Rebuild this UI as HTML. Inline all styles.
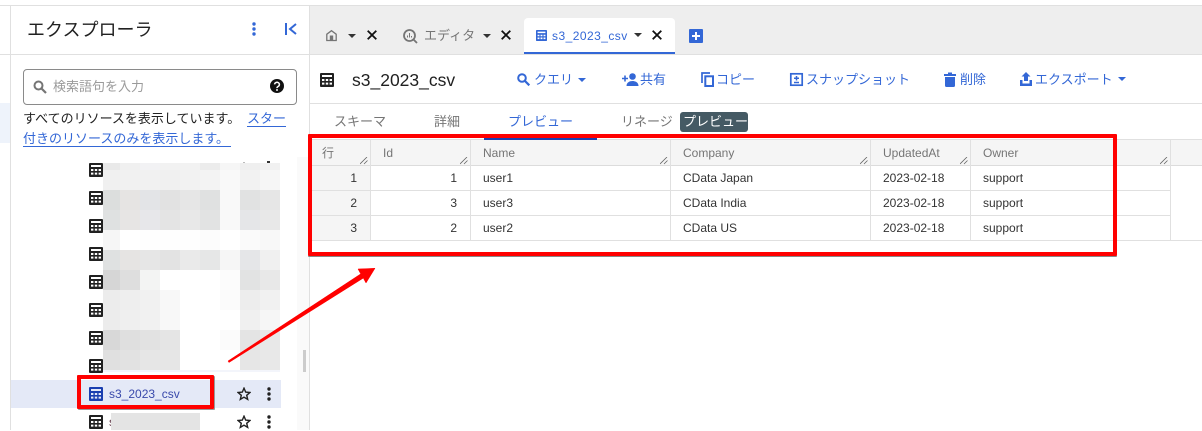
<!DOCTYPE html>
<html lang="ja"><head><meta charset="utf-8"><style>
html,body{margin:0;padding:0;background:#fff}
body{width:1202px;height:430px;position:relative;overflow:hidden;font-family:"Liberation Sans","Noto Sans CJK JP",sans-serif;font-size:13px;color:#212121}
.a{position:absolute}
.t{position:absolute;white-space:nowrap;line-height:18px;height:18px}
.b{color:#3367d6}.g{color:#757575}
.h{color:#757575;font-size:12px;top:144px}
.d{color:#333;font-size:12px}
svg{position:absolute;overflow:visible}
.r{text-align:right;width:30px}
</style></head><body>
<svg width="0" height="0" style="position:absolute"><defs>
<symbol id="tb" viewBox="0 0 14 14"><path fill-rule="evenodd" d="M1 0h12a1 1 0 0 1 1 1v12a1 1 0 0 1-1 1H1a1 1 0 0 1-1-1V1a1 1 0 0 1 1-1zM2 2v2h10V2zM2 6v2h2.4V6zM5.8 6v2h2.4V6zM9.6 6v2H12V6zM2 9.6v2h2.4v-2zM5.8 9.6v2h2.4v-2zM9.6 9.6v2H12v-2z"/></symbol>
<symbol id="star" viewBox="0 0 14 14"><path fill="none" stroke="#212121" stroke-width="1.4" d="M7 1.2l1.7 3.9 4.2.4-3.2 2.8 1 4.1L7 10.2l-3.7 2.2 1-4.1L1.1 5.5l4.2-.4z"/></symbol>
<symbol id="vd" viewBox="0 0 4 14"><circle cx="2" cy="2" r="1.7"/><circle cx="2" cy="7" r="1.7"/><circle cx="2" cy="12" r="1.7"/></symbol>
<symbol id="grip" viewBox="0 0 8 8"><path fill="none" stroke="#666" stroke-width=".8" d="M0 7L7 0M4 7L7.5 3.5"/></symbol>
</defs></svg>

<!-- chrome -->
<div class="a" style="left:0;top:5px;width:1202px;height:1px;background:#e0e0e0"></div>
<div class="a" style="left:0;top:103px;width:10px;height:40px;background:#eef3fb"></div>
<div class="a" style="left:10px;top:5px;width:1px;height:425px;background:#e0e0e0"></div>
<div class="a" style="left:309px;top:5px;width:1px;height:425px;background:#e0e0e0"></div>
<div class="a" style="left:0;top:54px;width:1202px;height:1px;background:#e0e0e0"></div>
<div class="a" style="left:310px;top:6px;width:892px;height:48px;background:#eee"></div>
<div class="a" style="left:310px;top:103px;width:892px;height:1px;background:#e0e0e0"></div>

<!-- sidebar header -->
<div class="t" style="left:27px;top:19px;font-size:18px;line-height:22px;height:22px">エクスプローラ</div>
<svg style="left:252px;top:22px;fill:#3367d6" width="4" height="14"><use href="#vd"/></svg>
<svg style="left:285px;top:23px" width="12" height="12"><path d="M1 0v12" stroke="#3367d6" stroke-width="2"/><path d="M11 1L5 6l6 5" fill="none" stroke="#3367d6" stroke-width="2"/></svg>
<div class="a" style="left:23px;top:69px;width:272px;height:34px;border:1px solid #8a8a8a;border-radius:4px"></div>
<svg style="left:33px;top:80px" width="14" height="14"><circle cx="5.5" cy="5.5" r="4" fill="none" stroke="#757575" stroke-width="2"/><path d="M8.5 8.5l4.5 4.5" stroke="#757575" stroke-width="2.2"/></svg>
<div class="t" style="left:53px;top:78px;color:#9a9a9a">検索語句を入力</div>
<svg style="left:270px;top:79px" width="14" height="14"><circle cx="7" cy="7" r="7" fill="#111"/><path d="M4.6 5.4a2.4 2.2 0 1 1 3.6 2c-.8.5-1.2.8-1.2 1.7" fill="none" stroke="#fff" stroke-width="1.5"/><circle cx="7" cy="11" r=".95" fill="#fff"/></svg>
<div class="t" style="left:23px;top:110px">すべてのリソースを表示しています。</div>
<div class="t b" style="left:247px;top:110px">スター</div>
<div class="a" style="left:247px;top:126px;width:39px;height:1px;background:#3367d6"></div>
<div class="t b" style="left:23px;top:130px">付きのリソースのみを表示します。</div>
<div class="a" style="left:23px;top:146px;width:208px;height:1px;background:#3367d6"></div>

<!-- scrollbar -->
<div class="a" style="left:297px;top:157px;width:12px;height:273px;background:#fafafa"></div>
<div class="a" style="left:303px;top:350px;width:3px;height:22px;background:#ccc"></div>

<!-- blurred mosaic -->
<div class="a" style="left:243px;top:162px;width:2px;height:1px;background:#bbb"></div>
<div class="a" style="left:267px;top:161px;width:3px;height:2px;background:#333"></div>
<svg style="left:103px;top:163px" width="177" height="209" shape-rendering="crispEdges">
<g transform="translate(0,0)"><rect x="0" width="17" height="7" fill="#e9e9e9"/><rect x="17" width="20" height="7" fill="#f0f0f0"/><rect x="37" width="20" height="7" fill="#f2f2f4"/><rect x="57" width="20" height="7" fill="#f2f2f2"/><rect x="77" width="20" height="7" fill="#f2f2f2"/><rect x="97" width="20" height="7" fill="#ececec"/><rect x="117" width="20" height="7" fill="#f6f6f6"/><rect x="137" width="20" height="7" fill="#efefef"/><rect x="157" width="20" height="7" fill="#f1f1f1"/></g>
<g transform="translate(0,7)"><rect x="0" width="17" height="20" fill="#f0f0f0"/><rect x="17" width="20" height="20" fill="#f1f1f1"/><rect x="37" width="20" height="20" fill="#f1f1f1"/><rect x="57" width="20" height="20" fill="#f0f0f0"/><rect x="77" width="20" height="20" fill="#f2f2f2"/><rect x="97" width="20" height="20" fill="#f3f3f3"/><rect x="117" width="20" height="20" fill="#f9f9f9"/><rect x="137" width="20" height="20" fill="#f2f2f2"/><rect x="157" width="20" height="20" fill="#f6f6f6"/></g>
<g transform="translate(0,27)"><rect x="0" width="17" height="20" fill="#dcdedd"/><rect x="17" width="20" height="20" fill="#e6e4e3"/><rect x="37" width="20" height="20" fill="#e3e4e7"/><rect x="57" width="20" height="20" fill="#e2e2e2"/><rect x="77" width="20" height="20" fill="#e6e6e6"/><rect x="97" width="20" height="20" fill="#e0e1e1"/><rect x="117" width="20" height="20" fill="#f9f9f9"/><rect x="137" width="20" height="20" fill="#e1e2e2"/><rect x="157" width="20" height="20" fill="#e6e6e6"/></g>
<g transform="translate(0,47)"><rect x="0" width="17" height="20" fill="#dfe1e1"/><rect x="17" width="20" height="20" fill="#e7e5e4"/><rect x="37" width="20" height="20" fill="#e7e7ea"/><rect x="57" width="20" height="20" fill="#e4e4e4"/><rect x="77" width="20" height="20" fill="#e8e8e8"/><rect x="97" width="20" height="20" fill="#e2e3e3"/><rect x="117" width="20" height="20" fill="#f9f9f9"/><rect x="137" width="20" height="20" fill="#e5e6e8"/><rect x="157" width="20" height="20" fill="#e8e8e8"/></g>
<g transform="translate(0,67)"><rect x="0" width="17" height="20" fill="#f6f6f6"/><rect x="17" width="20" height="20" fill="#fff"/><rect x="37" width="20" height="20" fill="#fefefe"/><rect x="57" width="20" height="20" fill="#fefefe"/><rect x="77" width="20" height="20" fill="#fefefe"/><rect x="97" width="20" height="20" fill="#fcfcfc"/><rect x="117" width="20" height="20" fill="#fff"/><rect x="137" width="20" height="20" fill="#fafafa"/><rect x="157" width="20" height="20" fill="#f8f8f8"/></g>
<g transform="translate(0,87)"><rect x="0" width="17" height="20" fill="#dfe1e1"/><rect x="17" width="20" height="20" fill="#e6e4e3"/><rect x="37" width="20" height="20" fill="#e6e6e6"/><rect x="57" width="20" height="20" fill="#e3e3e3"/><rect x="77" width="20" height="20" fill="#eaeaea"/><rect x="97" width="20" height="20" fill="#e6e7e7"/><rect x="117" width="20" height="20" fill="#f6f6f6"/><rect x="137" width="20" height="20" fill="#e5e6e8"/><rect x="157" width="20" height="20" fill="#f0f0f0"/></g>
<g transform="translate(0,107)"><rect x="0" width="17" height="20" fill="#d6d6d6"/><rect x="17" width="20" height="20" fill="#dedede"/><rect x="37" width="20" height="20" fill="#f3f4f3"/><rect x="117" width="20" height="20" fill="#fcfcfc"/><rect x="137" width="20" height="20" fill="#e2e3e3"/><rect x="157" width="20" height="20" fill="#e8e8e8"/></g>
<g transform="translate(0,127)"><rect x="0" width="17" height="20" fill="#ececec"/><rect x="17" width="20" height="20" fill="#eeeeee"/><rect x="37" width="20" height="20" fill="#f1f1f1"/><rect x="57" width="20" height="20" fill="#f8f8f8"/><rect x="117" width="20" height="20" fill="#fbfbfb"/><rect x="137" width="20" height="20" fill="#ededed"/><rect x="157" width="20" height="20" fill="#f1f1f1"/></g>
<g transform="translate(0,147)"><rect x="0" width="17" height="20" fill="#ececec"/><rect x="17" width="20" height="20" fill="#efefef"/><rect x="37" width="20" height="20" fill="#f1f1f1"/><rect x="57" width="20" height="20" fill="#f8f8f8"/><rect x="137" width="20" height="20" fill="#f0f0f0"/><rect x="157" width="20" height="20" fill="#f6f6f6"/></g>
<g transform="translate(0,167)"><rect x="0" width="17" height="20" fill="#d8d8d8"/><rect x="17" width="20" height="20" fill="#dfdfdf"/><rect x="37" width="20" height="20" fill="#e2e2e2"/><rect x="57" width="20" height="20" fill="#e5e5e5"/><rect x="117" width="20" height="20" fill="#fbfbfb"/><rect x="137" width="20" height="20" fill="#e4e4e4"/><rect x="157" width="20" height="20" fill="#e8e8e8"/></g>
<g transform="translate(0,187)"><rect x="0" width="17" height="20" fill="#e0e0e0"/><rect x="17" width="20" height="20" fill="#e2e2e2"/><rect x="37" width="20" height="20" fill="#e6e6e6"/><rect x="57" width="20" height="20" fill="#e6e6e6"/><rect x="137" width="20" height="20" fill="#e6e6e6"/><rect x="157" width="20" height="20" fill="#e8e8e8"/></g>
<rect y="207" width="177" height="2" fill="#f3f5fb"/>
</svg>
<svg style="left:89px;top:163px;fill:#212121" width="14" height="14"><use href="#tb"/></svg>
<svg style="left:89px;top:191px;fill:#212121" width="14" height="14"><use href="#tb"/></svg>
<svg style="left:89px;top:219px;fill:#212121" width="14" height="14"><use href="#tb"/></svg>
<svg style="left:89px;top:247px;fill:#212121" width="14" height="14"><use href="#tb"/></svg>
<svg style="left:89px;top:275px;fill:#212121" width="14" height="14"><use href="#tb"/></svg>
<svg style="left:89px;top:303px;fill:#212121" width="14" height="14"><use href="#tb"/></svg>
<svg style="left:89px;top:331px;fill:#212121" width="14" height="14"><use href="#tb"/></svg>
<svg style="left:89px;top:359px;fill:#212121" width="14" height="14"><use href="#tb"/></svg>

<!-- selected row -->
<div class="a" style="left:11px;top:380px;width:270px;height:28px;background:#e4e9f7"></div>
<svg style="left:89px;top:387px;fill:#1a3fb0" width="14" height="14"><use href="#tb"/></svg>
<div class="t" style="left:109px;top:385px;font-size:12px;color:#3949ab">s3_2023_csv</div>
<svg style="left:237px;top:387px" width="14" height="14"><use href="#star"/></svg>
<svg style="left:267px;top:387px;fill:#212121" width="4" height="14"><use href="#vd"/></svg>
<div class="a" style="left:77px;top:375px;width:129px;height:26px;border:4px solid #f00;border-radius:1px;box-shadow:1px 1px 0 #999"></div>

<svg style="left:89px;top:415px;fill:#212121" width="14" height="14"><use href="#tb"/></svg>
<div class="t" style="left:109px;top:413px;font-size:12px;color:#5a3040">s</div>
<div class="a" style="left:111px;top:413px;width:89px;height:17px;background:#e4e4e4"></div>
<svg style="left:237px;top:415px" width="14" height="14"><use href="#star"/></svg>
<svg style="left:267px;top:415px;fill:#212121" width="4" height="14"><use href="#vd"/></svg>

<!-- tabs -->
<svg style="left:326px;top:30px" width="11" height="11"><path d="M5.5.7L.8 4.2V10.500h9.400V4.200z" fill="none" stroke="#757575" stroke-width="1.300"/><rect x="3.800" y="5.500" width="3.400" height="5" fill="#757575"/></svg>
<svg style="left:348px;top:34px" width="8" height="4"><path d="M0 0h8L4 4z" fill="#333"/></svg>
<svg style="left:367px;top:30px" width="10" height="10"><path d="M.7.7l8.600 8.600M9.300.7L.7 9.300" stroke="#111" stroke-width="1.800"/></svg>
<svg style="left:403px;top:29px" width="15" height="15"><circle cx="6.500" cy="6.500" r="5.500" fill="none" stroke="#757575" stroke-width="1.800"/><path d="M10.500 10.500l3.500 3.500" stroke="#757575" stroke-width="1.800"/><path d="M4.500 6.500v2M6.500 4v4.500M8.500 7v1.500" stroke="#757575"/></svg>
<div class="t g" style="left:424px;top:27px">エディタ</div>
<svg style="left:483px;top:34px" width="8" height="4"><path d="M0 0h8L4 4z" fill="#333"/></svg>
<svg style="left:501px;top:30px" width="10" height="10"><path d="M.7.7l8.600 8.600M9.300.7L.7 9.300" stroke="#111" stroke-width="1.800"/></svg>
<div class="a" style="left:524px;top:18px;width:151px;height:36px;background:#fff;border-radius:4px 4px 0 0"></div>
<div class="a" style="left:524px;top:52px;width:151px;height:2px;background:#3367d6"></div>
<svg style="left:536px;top:30px;fill:#3367d6" width="11" height="11"><use href="#tb"/></svg>
<div class="t b" style="left:552px;top:27px;font-size:12px;letter-spacing:.45px">s3_2023_csv</div>
<svg style="left:634px;top:33px" width="8" height="4"><path d="M0 0h8L4 4z" fill="#333"/></svg>
<svg style="left:652px;top:30px" width="10" height="10"><path d="M.7.7l8.600 8.600M9.300.7L.7 9.300" stroke="#111" stroke-width="1.800"/></svg>
<svg style="left:689px;top:29px" width="14" height="14"><rect width="14" height="14" rx="1" fill="#3367d6"/><path d="M7 3v8M3 7h8" stroke="#fff" stroke-width="2"/></svg>

<!-- toolbar -->
<svg style="left:320px;top:73px;fill:#212121" width="14" height="14"><use href="#tb"/></svg>
<div class="t" style="left:352px;top:69px;font-size:17.5px;line-height:22px;height:22px">s3_2023_csv</div>
<svg style="left:517px;top:73px" width="13" height="13"><circle cx="5" cy="5" r="3.800" fill="none" stroke="#3367d6" stroke-width="2"/><path d="M8 8l4.300 4.300" stroke="#3367d6" stroke-width="2.200"/></svg>
<div class="t b" style="left:534px;top:71px">クエリ</div>
<svg style="left:578px;top:78px" width="8" height="4"><path d="M0 0h8L4 4z" fill="#3367d6"/></svg>
<svg style="left:622px;top:73px" width="17" height="13" fill="#3367d6"><circle cx="10.500" cy="3.500" r="3.300"/><path d="M4.500 13c0-3.400 3-5 6-5s6 1.600 6 5z"/><path d="M0 5.500h6M3 2.500v6" stroke="#3367d6" stroke-width="1.600"/></svg>
<div class="t b" style="left:640px;top:71px">共有</div>
<svg style="left:701px;top:72px" width="13" height="15" fill="none" stroke="#3367d6"><path d="M1 11V1h8" stroke-width="1.700"/><rect x="4.300" y="4.300" width="7.700" height="9.700" stroke-width="2"/></svg>
<div class="t b" style="left:716px;top:71px">コピー</div>
<svg style="left:790px;top:73px" width="13" height="13"><rect x=".8" y=".8" width="11.400" height="11.400" fill="none" stroke="#3367d6" stroke-width="1.700"/><path d="M6.500 3v4.500M4 5.200h5M4 9.500h5" stroke="#3367d6" stroke-width="1.500"/></svg>
<div class="t b" style="left:806px;top:71px">スナップショット</div>
<svg style="left:944px;top:72px" width="12" height="15" fill="#3367d6"><path d="M0 2h12v2H0zM4 .5h4V2H4zM1 5h10v8.500a1.500 1.500 0 0 1-1.500 1.500h-7A1.500 1.500 0 0 1 1 13.500z"/></svg>
<div class="t b" style="left:960px;top:71px">削除</div>
<svg style="left:1020px;top:72px" width="12" height="14" fill="#3367d6"><path d="M6 0l4.500 4.500H8V9H4V4.500H1.500zM0 8h2.500v3.500h7V8H12v6H0z"/></svg>
<div class="t b" style="left:1035px;top:71px">エクスポート</div>
<svg style="left:1118px;top:77px" width="8" height="4"><path d="M0 0h8L4 4z" fill="#3367d6"/></svg>

<!-- sub tabs -->
<div class="t g" style="left:334px;top:113px">スキーマ</div>
<div class="t g" style="left:434px;top:113px">詳細</div>
<div class="t b" style="left:508px;top:113px">プレビュー</div>
<div class="t g" style="left:621px;top:113px">リネージ</div>
<div class="a" style="left:680px;top:112px;width:68px;height:20px;background:#455a64;border-radius:3px"></div>
<div class="t" style="left:683px;top:113px;color:#fff">プレビュー</div>

<!-- table -->
<div class="a" style="left:312px;top:139px;width:890px;height:1px;background:#e0e0e0"></div>
<div class="a" style="left:312px;top:140px;width:890px;height:25px;background:#f5f5f5"></div>
<div class="a" style="left:312px;top:165px;width:58px;height:75px;background:#f5f5f5"></div>
<div class="a" style="left:312px;top:165px;width:890px;height:1px;background:#dcdcdc"></div>
<div class="a" style="left:312px;top:190px;width:858px;height:1px;background:#e0e0e0"></div>
<div class="a" style="left:312px;top:215px;width:858px;height:1px;background:#e0e0e0"></div>
<div class="a" style="left:312px;top:240px;width:890px;height:1px;background:#e0e0e0"></div>
<div class="a" style="left:370px;top:140px;width:1px;height:100px;background:#e0e0e0"></div>
<div class="a" style="left:470px;top:140px;width:1px;height:100px;background:#e0e0e0"></div>
<div class="a" style="left:670px;top:140px;width:1px;height:100px;background:#e0e0e0"></div>
<div class="a" style="left:870px;top:140px;width:1px;height:100px;background:#e0e0e0"></div>
<div class="a" style="left:970px;top:140px;width:1px;height:100px;background:#e0e0e0"></div>
<div class="a" style="left:1170px;top:140px;width:1px;height:100px;background:#e0e0e0"></div>
<svg style="left:360px;top:157px" width="8" height="8"><use href="#grip"/></svg>
<svg style="left:460px;top:157px" width="8" height="8"><use href="#grip"/></svg>
<svg style="left:660px;top:157px" width="8" height="8"><use href="#grip"/></svg>
<svg style="left:860px;top:157px" width="8" height="8"><use href="#grip"/></svg>
<svg style="left:960px;top:157px" width="8" height="8"><use href="#grip"/></svg>
<svg style="left:1160px;top:157px" width="8" height="8"><use href="#grip"/></svg>
<div class="t h" style="left:322px">行</div>
<div class="t h" style="left:383px">Id</div>
<div class="t h" style="left:483px">Name</div>
<div class="t h" style="left:683px">Company</div>
<div class="t h" style="left:883px">UpdatedAt</div>
<div class="t h" style="left:983px">Owner</div>

<div class="t d r" style="left:327px;top:169px">1</div><div class="t d r" style="left:427px;top:169px">1</div><div class="t d" style="left:483px;top:169px">user1</div><div class="t d" style="left:683px;top:169px">CData Japan</div><div class="t d" style="left:883px;top:169px">2023-02-18</div><div class="t d" style="left:983px;top:169px">support</div>
<div class="t d r" style="left:327px;top:194px">2</div><div class="t d r" style="left:427px;top:194px">3</div><div class="t d" style="left:483px;top:194px">user3</div><div class="t d" style="left:683px;top:194px">CData India</div><div class="t d" style="left:883px;top:194px">2023-02-18</div><div class="t d" style="left:983px;top:194px">support</div>
<div class="t d r" style="left:327px;top:219px">3</div><div class="t d r" style="left:427px;top:219px">2</div><div class="t d" style="left:483px;top:219px">user2</div><div class="t d" style="left:683px;top:219px">CData US</div><div class="t d" style="left:883px;top:219px">2023-02-18</div><div class="t d" style="left:983px;top:219px">support</div>

<!-- annotations -->
<div class="a" style="left:484px;top:138px;width:113px;height:2px;background:#1a3fb0"></div>
<div class="a" style="left:308px;top:134px;width:801px;height:114px;border:4px solid #f00;border-radius:1px;box-shadow:0 1px 0 #888"></div>
<svg style="left:0;top:0" width="1202" height="430"><path d="M228 361L360.700 273.900 358 269 375 268.300 366 283 363.300 278.100 229 362.500z" fill="#f00" stroke="#f00" stroke-width=".5" stroke-linejoin="round"/></svg>
</body></html>
